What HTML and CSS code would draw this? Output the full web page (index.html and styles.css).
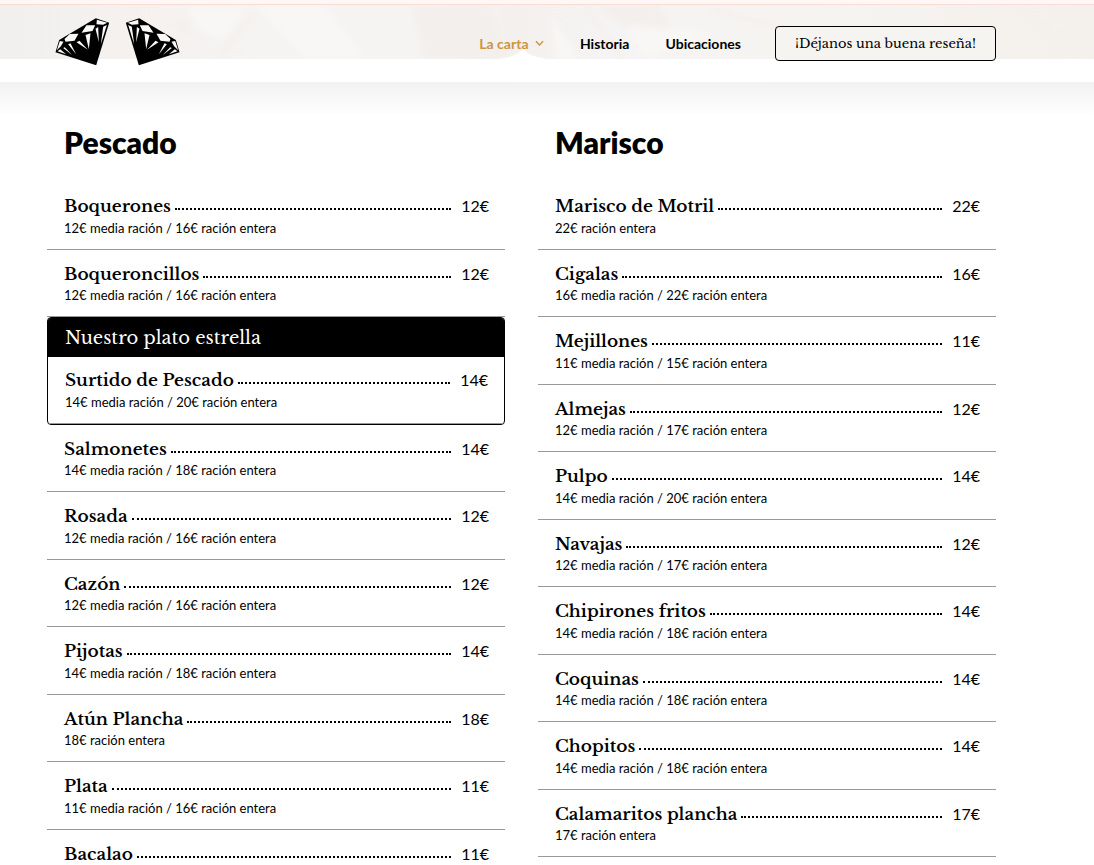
FILE: index.html
```html
<!DOCTYPE html>
<html lang="es">
<head>
<meta charset="utf-8">
<title>La carta</title>
<link rel="stylesheet" href="styles.css">
</head>
<body>
<header class="site-header">
  <div class="topbar"></div>
  <div class="banner">
    <svg class="marble" viewBox="0 0 1094 54" preserveAspectRatio="none" aria-hidden="true">
      <defs>
        <linearGradient id="stone" x1="0" x2="1" y1="0" y2="0">
          <stop offset="0" stop-color="#f1f0ef"/>
          <stop offset=".1" stop-color="#f4f1ef"/>
          <stop offset=".25" stop-color="#f6f4f2"/>
          <stop offset=".38" stop-color="#f5f4f3"/>
          <stop offset=".47" stop-color="#f4f0ed"/>
          <stop offset=".56" stop-color="#f5f4f4"/>
          <stop offset=".72" stop-color="#f6f4f1"/>
          <stop offset="1" stop-color="#f4f1ec"/>
        </linearGradient>
        <filter id="soft"><feGaussianBlur stdDeviation="3"/></filter>
      </defs>
      <path fill="url(#stone)" d="M0 0h1094v54H0z"/>
      <g filter="url(#soft)">
        <path fill="#f3efec" d="M175 12l16 8-4 10-10-6zM412 0h75l22 54h-84zM595 0h65l16 40-45-12z"/>
        <path fill="#f8f7f6" d="M185 2l60 2-20 30-25-8zM255 0l50 54h60L325 0zM550 10l30 44h-25zM625 20l90 8-70 26z"/>
        <path fill="none" stroke="#f4eeea" stroke-width="4" d="M255 8l-35 40M583 0l40 54M710 4l100 26M1010 0l60 44"/>
      </g>
    </svg>
    <div class="bar">
      <a class="logo" href="#" aria-label="Inicio">
        <svg viewBox="45 55 374 144" aria-hidden="true">
          <defs>
            <g id="gem" transform="translate(39 48)">
              <path d="M128 8L168 21 129 149 7 110 18 73z"/>
              <g fill="#faf9f8">
                <path d="M131 12l31 9-12 6-20-1zM100 29h26l-8 17-33 5zM50 55l26-1-12 21-27 3-3-8zM20 76l11 2-8 14-12 12z"/>
                <path d="M150 33l11-5-18 58zM127 39l8-5 2 46zM97 58l15-5-5 48zM70 80l9-5 25 27zM45 86l7-3 17 33zM30 97l5-2 22 23zM13 107l8-6 18 15z"/>
              </g>
            </g>
          </defs>
          <use href="#gem"/>
          <use href="#gem" transform="translate(464 0) scale(-1 1)"/>
        </svg>
      </a>
      <nav class="nav">
        <a class="active" href="#">La carta
          <svg class="chevron" viewBox="0 0 8 6" aria-hidden="true"><path fill="none" stroke="currentColor" stroke-width="1.200" d="M.8 1L4 4.400 7.200 1"/></svg>
          <svg class="pointer" viewBox="0 0 50 10" aria-hidden="true"><path fill="#fff" d="M0 10Q18 8 25 0Q32 8 50 10z"/></svg>
        </a>
        <a href="#">Historia</a>
        <a href="#">Ubicaciones</a>
      </nav>
      <a class="review" href="#">¡Déjanos una buena reseña!</a>
    </div>
  </div>
</header>
<main class="menu">
  <section class="column">
    <h2>Pescado</h2>
    <article class="dish"><div class="line"><h3>Boquerones</h3><i></i><span>12€</span></div><p>12€ media ración / 16€ ración entera</p></article>
    <article class="dish"><div class="line"><h3>Boqueroncillos</h3><i></i><span>12€</span></div><p>12€ media ración / 16€ ración entera</p></article>
    <div class="star">
      <div class="star-title">Nuestro plato estrella</div>
      <article class="dish"><div class="line"><h3>Surtido de Pescado</h3><i></i><span>14€</span></div><p>14€ media ración / 20€ ración entera</p></article>
    </div>
    <article class="dish"><div class="line"><h3>Salmonetes</h3><i></i><span>14€</span></div><p>14€ media ración / 18€ ración entera</p></article>
    <article class="dish"><div class="line"><h3>Rosada</h3><i></i><span>12€</span></div><p>12€ media ración / 16€ ración entera</p></article>
    <article class="dish"><div class="line"><h3>Cazón</h3><i></i><span>12€</span></div><p>12€ media ración / 16€ ración entera</p></article>
    <article class="dish"><div class="line"><h3>Pijotas</h3><i></i><span>14€</span></div><p>14€ media ración / 18€ ración entera</p></article>
    <article class="dish"><div class="line"><h3>Atún Plancha</h3><i></i><span>18€</span></div><p>18€ ración entera</p></article>
    <article class="dish"><div class="line"><h3>Plata</h3><i></i><span>11€</span></div><p>11€ media ración / 16€ ración entera</p></article>
    <article class="dish"><div class="line"><h3>Bacalao</h3><i></i><span>11€</span></div></article>
  </section>
  <section class="column">
    <h2>Marisco</h2>
    <article class="dish"><div class="line"><h3>Marisco de Motril</h3><i></i><span>22€</span></div><p>22€ ración entera</p></article>
    <article class="dish"><div class="line"><h3>Cigalas</h3><i></i><span>16€</span></div><p>16€ media ración / 22€ ración entera</p></article>
    <article class="dish"><div class="line"><h3>Mejillones</h3><i></i><span>11€</span></div><p>11€ media ración / 15€ ración entera</p></article>
    <article class="dish"><div class="line"><h3>Almejas</h3><i></i><span>12€</span></div><p>12€ media ración / 17€ ración entera</p></article>
    <article class="dish"><div class="line"><h3>Pulpo</h3><i></i><span>14€</span></div><p>14€ media ración / 20€ ración entera</p></article>
    <article class="dish"><div class="line"><h3>Navajas</h3><i></i><span>12€</span></div><p>12€ media ración / 17€ ración entera</p></article>
    <article class="dish"><div class="line"><h3>Chipirones fritos</h3><i></i><span>14€</span></div><p>14€ media ración / 18€ ración entera</p></article>
    <article class="dish"><div class="line"><h3>Coquinas</h3><i></i><span>14€</span></div><p>14€ media ración / 18€ ración entera</p></article>
    <article class="dish"><div class="line"><h3>Chopitos</h3><i></i><span>14€</span></div><p>14€ media ración / 18€ ración entera</p></article>
    <article class="dish"><div class="line"><h3>Calamaritos plancha</h3><i></i><span>17€</span></div><p>17€ ración entera</p></article>
  </section>
</main>
</body>
</html>
```
FILE: styles.css
```css
* { box-sizing: border-box; }

body {
  margin: 0;
  height: 100vh;
  overflow: hidden;
  background: #fff;
  color: #000;
  font-family: Lato, sans-serif;
}

a { color: inherit; text-decoration: none; }

.topbar {
  height: 5px;
  background: #fff7f5;
  border-bottom: 1px solid #f8dcd3;
}

.banner {
  position: relative;
  height: 77px;
}

.marble {
  position: absolute;
  top: 0;
  left: 0;
  width: 100%;
  height: 54px;
}

.bar {
  position: relative;
  z-index: 0;
  display: flex;
  align-items: flex-start;
  padding: 13px 98px 0 55px;
}

.logo { margin-right: auto; }
.logo svg { display: block; width: 125px; height: 48px; }

.nav {
  display: flex;
  gap: 36px;
  margin-right: 34px;
  padding-top: 16px;
  font-size: 14px;
  line-height: 20px;
  font-weight: 700;
}

.nav .active {
  position: relative;
  color: #cc9544;
}

.pointer {
  position: absolute;
  top: 15px;
  right: -4px;
  z-index: -1;
  width: 50px;
  height: 10px;
}

.chevron {
  width: 9px;
  height: 7px;
  margin-left: 3px;
  vertical-align: 2px;
}

.review {
  margin-top: 8px;
  padding: 0 19px;
  border: 1px solid #000;
  border-radius: 4px;
  background: #f6f4f1;
  font: 13px/33px "Libre Baskerville", "Liberation Serif", serif;
}

.menu {
  display: grid;
  grid-template-columns: 1fr 1fr;
  gap: 33px;
  padding: 42px 98px 0 47px;
  background: linear-gradient(#f2f2f2, #fff 34px);
}

h2 {
  margin: 0 0 22px;
  padding: 0 17px;
  font-size: 30px;
  line-height: 36px;
  font-weight: 800;
}

.dish {
  padding: 12px 16px 14px 17px;
  border-bottom: 1px solid #999;
}

.line {
  display: flex;
  align-items: baseline;
  font-size: 17px;
  line-height: 1.5;
}

h3 {
  margin: 0;
  font: 600 17px/1.5 "Libre Baskerville", "Liberation Serif", serif;
}

.line i {
  flex: 1;
  height: 4px;
  margin: 0 10px 0 4px;
  border-top: 2px dotted #000;
}

.line span { font-size: 16px; line-height: 20px; }

.dish p {
  margin: 1px 0 0;
  font-size: 13px;
  line-height: 14px;
}

.star {
  border: 1px solid #000;
  border-radius: 4px;
  overflow: hidden;
}

.star-title {
  padding: 1px 17px 0;
  background: #000;
  color: #fff;
  font: 18px/38px "Libre Baskerville", "Liberation Serif", serif;
}

.star .dish { padding-top: 11px; }
```
